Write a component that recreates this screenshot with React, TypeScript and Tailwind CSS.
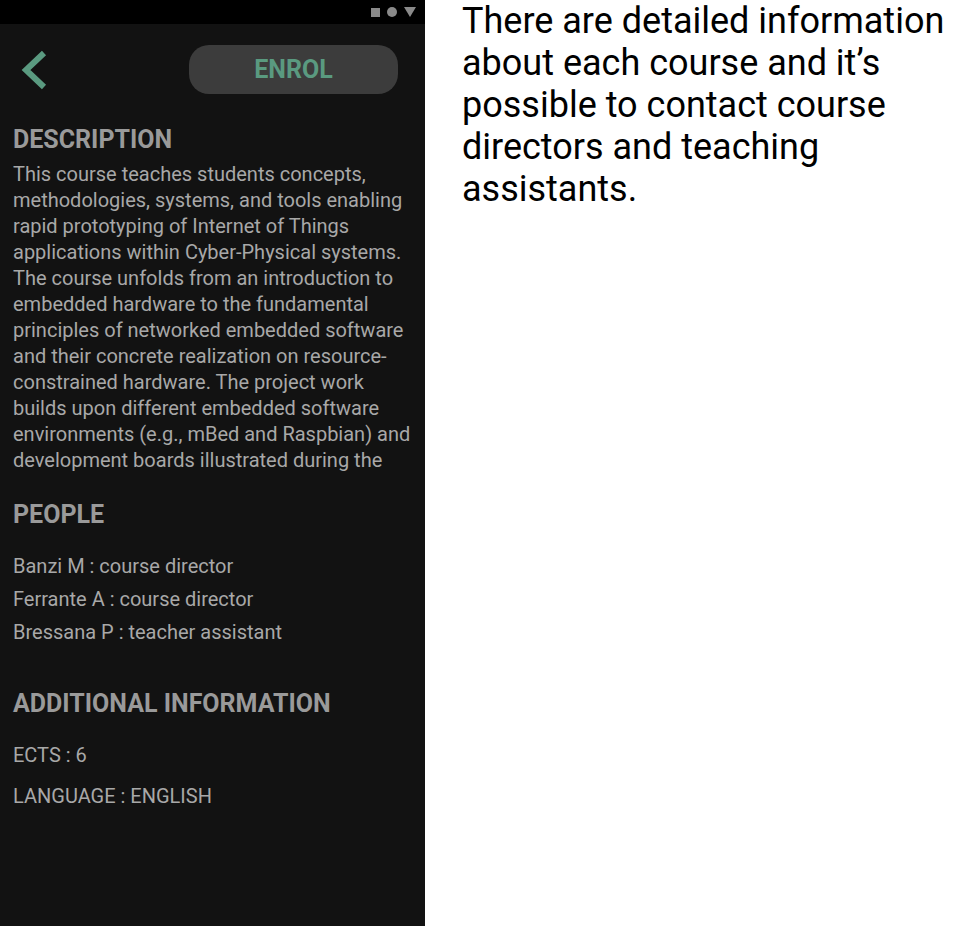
import React from "react";

const desc =
  "This course teaches students concepts, methodologies, systems, and tools enabling rapid prototyping of Internet of Things applications within Cyber-Physical systems. The course unfolds from an introduction to embedded hardware to the fundamental principles of networked embedded software and their concrete realization on resource-constrained hardware. The project work builds upon different embedded software environments (e.g., mBed and Raspbian) and development boards illustrated during the course lectures and laboratory sessions.";

export default function App() {
  return (
    <div
      className="flex w-[960px] h-[926px] bg-white overflow-hidden"
      style={{ fontFamily: "Roboto, 'Noto Sans', sans-serif" }}
    >
      <div className="w-[425px] h-full bg-[#121212] flex flex-col">
        <div className="h-[24px] bg-black flex items-center justify-end pr-[9px] gap-[7px]">
          <div className="w-[9px] h-[9px] bg-[#8a8a8a]" />
          <div className="w-[10px] h-[10px] rounded-full bg-[#8a8a8a]" />
          <svg width="12" height="10" viewBox="0 0 12 10">
            <polygon points="0,0 12,0 6,10" fill="#8a8a8a" />
          </svg>
        </div>
        <div className="flex items-center justify-between pt-[21px] pl-[20px] pr-[27px]">
          <svg width="30" height="40" viewBox="0 0 30 40">
            <polyline
              points="24,3 6,20 24,37"
              fill="none"
              stroke="#5a9a80"
              strokeWidth="6"
              strokeLinejoin="miter"
            />
          </svg>
          <div className="w-[209px] h-[49px] rounded-[20px] bg-[#3c3c3c] flex items-center justify-center text-[25px] font-bold text-[#5a9a80]">
            ENROL
          </div>
        </div>
        <div className="px-[13px]">
          <div className="mt-[32px] text-[25px] leading-[28px] font-bold text-[#9a9a9a]">
            DESCRIPTION
          </div>
          <div className="mt-[7px] h-[312px] overflow-hidden text-[20px] leading-[26px] text-[#a8a8a8]">
            {desc}
          </div>
          <div className="mt-[28px] text-[25px] leading-[28px] font-bold text-[#9a9a9a]">
            PEOPLE
          </div>
          <div className="mt-[21px] text-[20px] leading-[33px] text-[#a8a8a8]">
            <div>Banzi M : course director</div>
            <div>Ferrante A : course director</div>
            <div>Bressana P : teacher assistant</div>
          </div>
          <div className="mt-[41px] text-[25px] leading-[28px] font-bold text-[#9a9a9a]">
            ADDITIONAL INFORMATION
          </div>
          <div className="mt-[17px] text-[20px] leading-[41px] text-[#a8a8a8]">
            <div>ECTS : 6</div>
            <div>LANGUAGE : ENGLISH</div>
          </div>
        </div>
      </div>
      <div className="flex-1 pl-[37px]">
        <div className="text-[36px] leading-[42px] text-black">
          There are detailed information about each course and it’s possible to contact course directors and teaching assistants.
        </div>
      </div>
    </div>
  );
}
